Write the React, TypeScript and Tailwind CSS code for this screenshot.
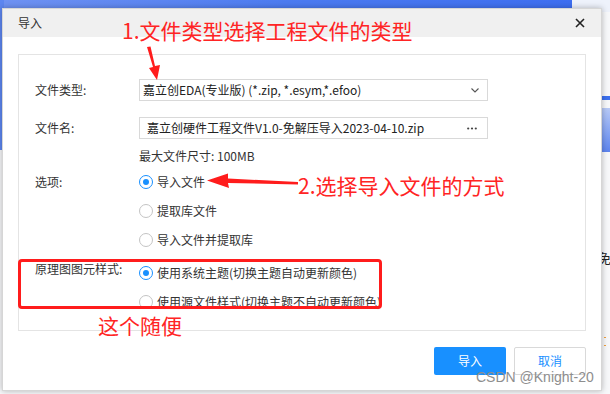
import React from "react";

type RadioProps = {
  label: string;
  checked?: boolean;
};

function Radio({ label, checked = false }: RadioProps) {
  return (
    <div className="flex h-[29px] items-center gap-[4px]">
      <span
        className={
          checked
            ? "flex h-[14px] w-[14px] items-center justify-center rounded-full border border-[#1890ff] bg-white"
            : "flex h-[14px] w-[14px] items-center justify-center rounded-full border border-[#c4c4c4] bg-white"
        }
      >
        {checked ? <span className="h-[6px] w-[6px] rounded-full bg-[#1890ff]" /> : null}
      </span>
      <span className="text-[12px] leading-none text-[#333]">{label}</span>
    </div>
  );
}

function Field({ label, children }: { label: string; children: React.ReactNode }) {
  return (
    <div className="flex items-center">
      <div className="w-[104px] text-[12px] leading-none text-[#333]">{label}</div>
      {children}
    </div>
  );
}

function ImportDialog() {
  return (
    <div className="absolute left-[2px] top-[8px] flex h-[383px] w-[600px] flex-col border border-[#d6d6d6] bg-white shadow-[0_0_6px_rgba(0,0,0,0.28)]">
      <div className="flex h-[28px] items-center justify-between bg-[#f0f0f0] pl-[15px] pr-[16px]">
        <span className="text-[12px] leading-none text-[#333]">导入</span>
        <svg width="10" height="10" viewBox="0 0 10 10">
          <path d="M1 1 L9 9 M9 1 L1 9" stroke="#222" strokeWidth="1.6" />
        </svg>
      </div>

      <div className="relative mx-[15px] mt-[17px] h-[277px] border border-[#e4e4e4] pl-[16px] pt-[24px]">
        <Field label="文件类型:">
          <div className="flex h-[22px] w-[349px] items-center justify-between border border-[#d9d9d9] pl-[3px] pr-[8px]">
            <span className="text-[12px] leading-none text-[#222]">
              嘉立创EDA(专业版) (*.zip, *.esym,*.efoo)
            </span>
            <svg width="8" height="5" viewBox="0 0 8 5">
              <path d="M0.5 0.5 L4 4 L7.5 0.5" stroke="#555" strokeWidth="1.1" fill="none" />
            </svg>
          </div>
        </Field>

        <div className="mt-[16px]">
          <Field label="文件名:">
            <div className="flex h-[22px] w-[349px] items-center justify-between border border-[#d9d9d9] pl-[7px] pr-[10px]">
              <span className="text-[12px] leading-none text-[#222]">
                嘉立创硬件工程文件V1.0-免解压导入2023-04-10.zip
              </span>
              <svg width="10" height="3" viewBox="0 0 10 3">
                <circle cx="1.2" cy="1.5" r="1.1" fill="#444" />
                <circle cx="5" cy="1.5" r="1.1" fill="#444" />
                <circle cx="8.8" cy="1.5" r="1.1" fill="#444" />
              </svg>
            </div>
          </Field>
        </div>

        <div className="ml-[104px] mt-[8px] flex h-[18px] items-center text-[12px] leading-none text-[#333]">
          最大文件尺寸: 100MB
        </div>

        <div className="mt-[2px] flex">
          <div className="w-[104px] pt-[9px] text-[12px] leading-none text-[#333]">选项:</div>
          <div className="flex flex-col">
            <Radio label="导入文件" checked />
            <Radio label="提取库文件" />
            <Radio label="导入文件并提取库" />
          </div>
        </div>

        <div className="mt-[4px] flex">
          <div className="w-[104px] pt-[5px] text-[12px] leading-none text-[#333]">原理图图元样式:</div>
          <div className="flex flex-col">
            <Radio label="使用系统主题(切换主题自动更新颜色)" checked />
            <Radio label="使用源文件样式(切换主题不自动更新颜色)" />
          </div>
        </div>

        <div className="absolute left-[-1px] top-[204px] h-[50px] w-[364px] rounded-[4px] border-[3px] border-[#ff1c1c]" />
      </div>

      <div className="mt-[16px] flex justify-end gap-[8px] pr-[15px]">
        <button className="h-[28px] w-[72px] rounded-[2px] bg-[#1890ff] text-[12px] text-white">导入</button>
        <button className="h-[28px] w-[72px] rounded-[2px] border border-[#d9d9d9] bg-white text-[12px] text-[#1890ff]">
          取消
        </button>
      </div>
    </div>
  );
}

export default function App() {
  return (
    <div className="relative h-[394px] w-[610px] overflow-hidden bg-[#f7f8fa] font-['Noto_Sans_CJK_SC','Microsoft_YaHei',sans-serif]">
      {/* desktop behind the dialog */}
      <div className="absolute left-0 top-0 h-[12px] w-[572px] bg-gradient-to-r from-[#6f92f2] via-[#4c7bf0] to-[#3e6ef0]" />
      <div className="absolute left-0 top-0 h-[150px] w-[4px] bg-[#5d86f0]" />
      <div className="absolute left-[572px] top-0 h-[12px] w-[38px] bg-[#eef2fb]" />
      <div className="absolute left-[600px] top-[96px] h-[4px] w-[10px] bg-[#3c70ef]" />
      <div className="absolute left-[600px] top-[108px] h-[44px] w-[10px] bg-gradient-to-b from-[#b8c9f6] to-[#5d84ee]" />
      <div className="absolute left-[598px] top-[251px] text-[13px] leading-none text-[#222]">免</div>
      <div className="absolute left-[604px] top-[337px] h-[1px] w-[2px] bg-[#f0a040]" />
      <div className="absolute left-[604px] top-[345px] h-[1px] w-[2px] bg-[#f0a040]" />

      <ImportDialog />

      {/* annotations */}
      <div className="absolute left-[122px] top-[20px] text-[21px] leading-none text-[#ff2424]">
        1.文件类型选择工程文件的类型
      </div>
      <svg className="absolute left-0 top-0" width="610" height="394" viewBox="0 0 610 394">
        <path d="M147 47 L150.5 46.5 L155 66 L160 65 L157 80 L149 68 L153 67 Z" fill="#ff1c1c" />
        <path d="M298 182 L298 184.5 L228 183 L229 188 L207 180.5 L228 173.5 L228 178.5 Z" fill="#ff1c1c" />
      </svg>
      <div className="absolute left-[298px] top-[175px] text-[21px] leading-none text-[#ff2424]">
        2.选择导入文件的方式
      </div>
      <div className="absolute left-[98px] top-[315px] text-[21px] leading-none text-[#ff2424]">这个随便</div>

      <div className="absolute left-[476px] top-[370px] font-['Liberation_Sans',sans-serif] text-[14px] leading-none text-[#8e8e8e]">
        CSDN @Knight-20
      </div>
    </div>
  );
}
